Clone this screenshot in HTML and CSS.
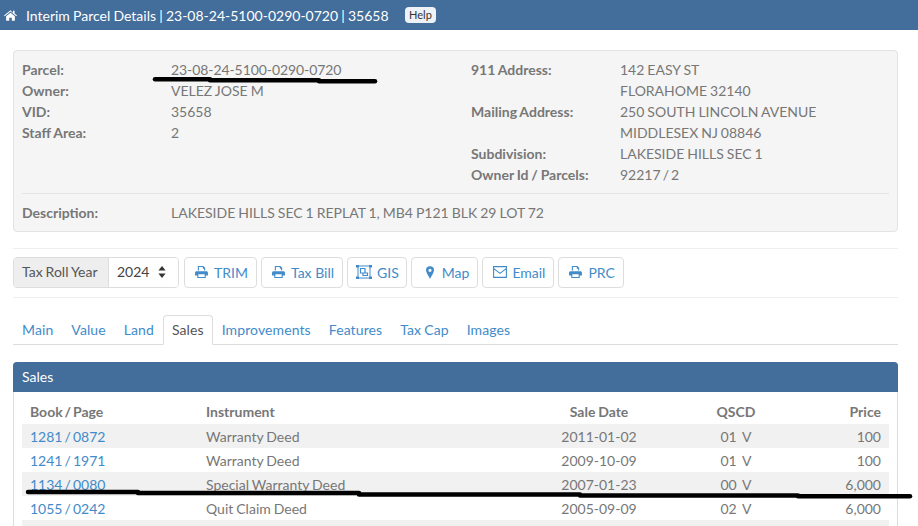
FILE: index.html
```html
<!DOCTYPE html>
<html lang="en">
<head>
<meta charset="utf-8">
<title>Interim Parcel Details</title>
<link rel="stylesheet" href="styles.css">
</head>
<body>
<header class="topbar">
  <svg class="home-icon" viewBox="0 0 16 13"><path d="M8 0 0 6.400l.9 1L8 1.700l7.100 5.700.9-1-3-2.400V.8h-2v2.500zM8 3 2.600 7.400V12.300c0 .4.300.7.700.7h3.100V9.200h3.200V13h3.100c.4 0 .7-.3.700-.7V7.400z"/></svg>
  <span class="topbar-title">Interim Parcel Details | 23-08-24-5100-0290-0720 | 35658</span>
  <span class="help">Help</span>
</header>
<main class="page">
  <section class="well">
    <div class="info-grid">
      <div class="info-col">
        <div class="info-row"><b>Parcel:</b><span class="parcel">23-08-24-5100-0290-0720</span></div>
        <div class="info-row"><b>Owner:</b><span>VELEZ JOSE M</span></div>
        <div class="info-row"><b>VID:</b><span>35658</span></div>
        <div class="info-row"><b>Staff Area:</b><span>2</span></div>
      </div>
      <div class="info-col">
        <div class="info-row"><b>911 Address:</b><span>142 EASY ST<br>FLORAHOME 32140</span></div>
        <div class="info-row"><b>Mailing Address:</b><span>250 SOUTH LINCOLN AVENUE<br>MIDDLESEX NJ 08846</span></div>
        <div class="info-row"><b>Subdivision:</b><span>LAKESIDE HILLS SEC 1</span></div>
        <div class="info-row"><b>Owner Id / Parcels:</b><span class="tight">92217 / 2</span></div>
      </div>
    </div>
    <div class="info-row desc"><b>Description:</b><span>LAKESIDE HILLS SEC 1 REPLAT 1, MB4 P121 BLK 29 LOT 72</span></div>
  </section>

  <div class="toolbar">
    <div class="year-group">
      <span class="year-label">Tax Roll Year</span>
      <span class="year-select">2024
        <svg class="sort-icon" viewBox="0 0 8 12"><path d="M4 0l3.600 4.600H.4zM4 12 .4 7.400h7.200z"/></svg>
      </span>
    </div>
    <a class="btn"><svg class="ico" viewBox="0 0 14 13"><path d="M3 0h6l2 2v3H9.800V3H8.400V1.200H4.200V5H3zM1.600 5.600h10.800c.9 0 1.600.7 1.600 1.600v3.200h-2.400V13H2.400v-2.600H0V7.200c0-.9.7-1.600 1.600-1.600zM3.600 9v2.800h6.800V9z"/></svg>TRIM</a>
    <a class="btn btn-bill"><svg class="ico" viewBox="0 0 14 13"><path d="M3 0h6l2 2v3H9.800V3H8.400V1.200H4.200V5H3zM1.600 5.600h10.800c.9 0 1.600.7 1.600 1.600v3.200h-2.400V13H2.400v-2.600H0V7.200c0-.9.7-1.600 1.600-1.600zM3.600 9v2.800h6.800V9z"/></svg>Tax Bill</a>
    <a class="btn btn-gis"><svg class="ico ico-gis" viewBox="0 0 16 14"><path d="M1 1h14M1 13h14M2 1v12M14 1v12" fill="none" stroke="currentColor"/><path d="M4.500 3.500h4.500v4.500h-4.500zM7 8h4.500V10.500h-4.500z" fill="none" stroke="currentColor" stroke-width="1.200"/><path d="M0 0h3v2.500H0zM13 0h3v2.500h-3zM0 11.500h3V14H0zM13 11.500h3V14h-3z"/></svg>GIS</a>
    <a class="btn btn-map"><svg class="ico ico-map" viewBox="0 0 9 14"><path fill-rule="evenodd" d="M4.500 0A4.500 4.500 0 0 0 0 4.500C0 7 4.500 14 4.500 14S9 7 9 4.500A4.500 4.500 0 0 0 4.500 0zm0 2.800a1.800 1.800 0 1 1 0 3.600 1.800 1.800 0 0 1 0-3.600z"/></svg>Map</a>
    <a class="btn"><svg class="ico ico-mail" viewBox="0 0 14 12"><path d="M.6.6h12.800v10.800H.6zM.8 2.600 7 7.400l6.200-4.800" fill="none" stroke="currentColor" stroke-width="1.100"/></svg>Email</a>
    <a class="btn"><svg class="ico" viewBox="0 0 14 13"><path d="M3 0h6l2 2v3H9.800V3H8.400V1.200H4.200V5H3zM1.600 5.600h10.800c.9 0 1.600.7 1.600 1.600v3.200h-2.400V13H2.400v-2.600H0V7.200c0-.9.7-1.600 1.600-1.600zM3.600 9v2.800h6.800V9z"/></svg>PRC</a>
  </div>

  <nav class="tabs">
    <a class="tab">Main</a>
    <a class="tab">Value</a>
    <a class="tab">Land</a>
    <a class="tab active">Sales</a>
    <a class="tab">Improvements</a>
    <a class="tab">Features</a>
    <a class="tab">Tax Cap</a>
    <a class="tab">Images</a>
  </nav>

  <section class="panel">
    <h2 class="panel-head">Sales</h2>
    <div class="panel-body">
      <table class="sales">
        <thead>
          <tr><th class="c-book tight">Book / Page</th><th class="c-inst">Instrument</th><th class="c-date">Sale Date</th><th class="c-qscd">QSCD</th><th class="c-price">Price</th></tr>
        </thead>
        <tbody>
          <tr><td><a class="tight">1281 / 0872</a></td><td>Warranty Deed</td><td class="c-date">2011-01-02</td><td class="c-qscd">01&nbsp; V</td><td class="c-price">100</td></tr>
          <tr><td><a class="tight">1241 / 1971</a></td><td>Warranty Deed</td><td class="c-date">2009-10-09</td><td class="c-qscd">01&nbsp; V</td><td class="c-price">100</td></tr>
          <tr><td><a class="tight">1134 / 0080</a></td><td>Special Warranty Deed</td><td class="c-date">2007-01-23</td><td class="c-qscd">00&nbsp; V</td><td class="c-price">6,000</td></tr>
          <tr><td><a class="tight">1055 / 0242</a></td><td>Quit Claim Deed</td><td class="c-date">2005-09-09</td><td class="c-qscd">02&nbsp; V</td><td class="c-price">6,000</td></tr>
          <tr><td>&nbsp;</td><td></td><td></td><td></td><td></td></tr>
        </tbody>
      </table>
    </div>
  </section>
</main>
<svg class="scribble" viewBox="0 0 918 526">
  <path d="M155 79.300H210"/>
  <path d="M210 80.300H319"/>
  <path d="M319 81.300H375"/>
  <path d="M28 492H138"/>
  <path d="M138 493H359"/>
  <path d="M359 494.500H580"/>
  <path d="M580 495.500H798"/>
  <path d="M798 496.300H910"/>
</svg>
</body>
</html>
```

FILE: styles.css
```css
* { box-sizing: border-box; }
html, body { margin: 0; height: 526px; overflow: hidden; }
body {
  position: relative;
  font-family: Lato, "Liberation Sans", sans-serif;
  font-size: 14px;
  line-height: 21px;
  word-spacing: -0.6px;
  color: #777;
  background: #fff;
}
.tight { word-spacing: -1.5px; }
.parcel { letter-spacing: -0.08px; }
.topbar {
  height: 30px;
  background: #436d9a;
  color: #fff;
  display: flex;
  align-items: center;
  padding-left: 4px;
  word-spacing: -0.4px;
}
.home-icon { width: 13px; height: 11px; fill: #fff; margin-right: 9px; }
.help {
  margin-left: 16px;
  background: #eef1f5;
  color: #333;
  font-size: 11px;
  line-height: 16px;
  padding: 0 4.500px;
  border-radius: 4px;
}
.page { padding: 20px 20px 0 13px; }
.well {
  height: 182px;
  background: #f5f5f5;
  border: 1px solid #e3e3e3;
  border-radius: 4px;
  padding: 8px 8px 0;
}
.info-grid {
  display: grid;
  grid-template-columns: 449px 1fr;
  height: 135px;
  border-bottom: 1px solid #e3e3e3;
}
.info-row { display: grid; grid-template-columns: 149px 1fr; }
.info-row b { font-weight: 700; }
.desc { margin-top: 8px; }
.toolbar {
  margin-top: 16px;
  border-top: 1px solid #eee;
  border-bottom: 1px solid #eee;
  height: 50px;
  padding-top: 8px;
  display: flex;
  gap: 4px;
}
.year-group {
  display: flex;
  height: 31px;
  border: 1px solid #ddd;
  border-radius: 4px;
  margin-right: 1px;
  color: #555;
}
.year-label {
  width: 95px;
  background: #eee;
  border-right: 1px solid #ddd;
  padding: 3px 8px;
  border-radius: 3px 0 0 3px;
}
.year-select {
  width: 69px;
  padding: 0 8px 2px;
  background: #fff;
  color: #444;
  display: flex;
  align-items: center;
  justify-content: space-between;
  border-radius: 0 3px 3px 0;
}
.sort-icon { width: 8px; height: 12px; fill: #333; margin-right: 4px; }
.btn {
  display: flex;
  align-items: center;
  height: 31px;
  padding: 0 8px 1px 10px;
  border: 1px solid #ddd;
  border-radius: 4px;
  color: #428bca;
  background: #fff;
}
.ico { width: 13px; height: 12px; fill: currentColor; margin-right: 6px; }
.btn-bill { word-spacing: 0; }
.btn-gis { padding-left: 8px; padding-right: 7px; }
.btn-map { padding-left: 14px; padding-right: 8px; }
.ico-gis { width: 16px; height: 14px; margin-right: 5px; }
.ico-map { width: 8px; height: 13px; margin-right: 8px; }
.ico-mail { width: 14px; height: 12px; margin-right: 5px; }
.tabs {
  margin-top: 17px;
  height: 30px;
  display: flex;
  letter-spacing: 0.1px;
  border-bottom: 1px solid #ddd;
}
.tab {
  padding: 3px 8px;
  height: 30px;
  color: #428bca;
  border: 1px solid transparent;
  border-radius: 4px 4px 0 0;
}
.tab.active {
  color: #555;
  background: #fff;
  border-color: #ddd #ddd #fff;
}
.panel {
  margin-top: 17px;
  border: 1px solid #ddd;
  border-radius: 4px;
}
.panel-head {
  margin: -1px -1px 0;
  height: 30px;
  padding: 4px 9px;
  background: #436d9a;
  color: #fff;
  font-size: 14px;
  line-height: 21px;
  font-weight: 400;
  border-radius: 4px 4px 0 0;
}
.panel-body { padding: 8px 8px 0; }
.sales { width: 867px; border-collapse: collapse; table-layout: fixed; }
.sales th, .sales td { padding: 0 8px; height: 24px; text-align: left; }
.sales th { font-weight: 700; padding-bottom: 2px; }
.sales tbody tr:nth-child(odd) { background: #f1f1f1; }
.sales a { color: #428bca; }
.c-book { width: 176px; }
.c-inst { width: 332px; }
.sales .c-date { width: 138px; text-align: center; }
.sales .c-qscd { width: 136px; text-align: center; }
.sales .c-price { text-align: right; }
.scribble {
  position: absolute;
  left: 0;
  top: 0;
  width: 918px;
  height: 526px;
  pointer-events: none;
}
.scribble path { fill: none; stroke: #000; stroke-width: 4.500; stroke-linecap: round; }
```
